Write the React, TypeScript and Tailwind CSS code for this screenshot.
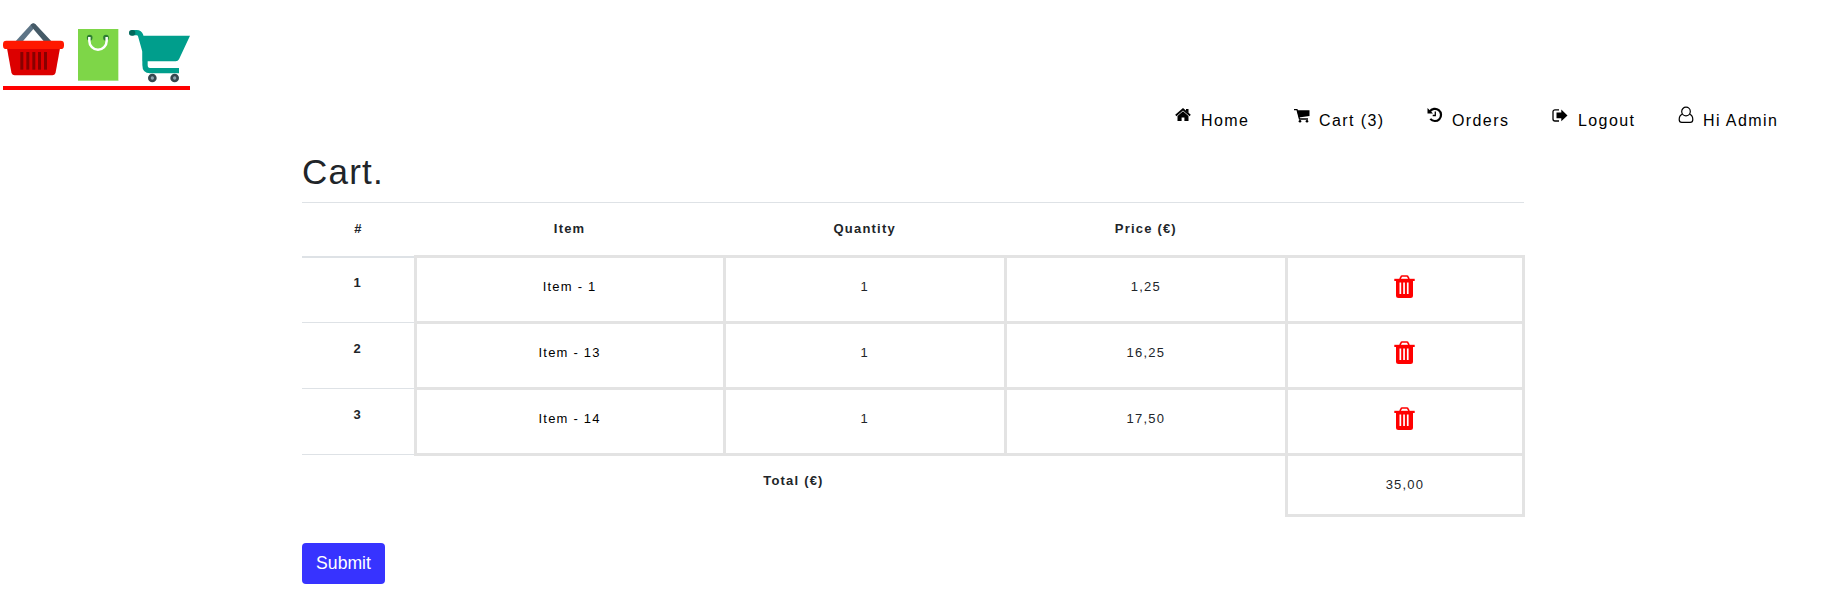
import React from "react";

const items = [
  { n: 1, name: "Item - 1", qty: 1, price: "1,25" },
  { n: 2, name: "Item - 13", qty: 1, price: "16,25" },
  { n: 3, name: "Item - 14", qty: 1, price: "17,50" },
];

function Logo() {
  return (
    <svg className="h-[80px] w-[200px]" viewBox="0 0 600 240" aria-label="Shop logo">
      <path d="M44 82 L92 29 Q100 22 108 29 L100 42 L66 82 Z" fill="#5d7486" />
      <path d="M100 42 L92 29 Q100 20 108 29 L157 82 L134 82 Z" fill="#455a67" />
      <path d="M21 100 H180 L167 172 Q165 181 157 181 H44 Q36 181 34 172 Z" fill="#dc0000" />
      <rect x="9" y="77" width="183" height="25" rx="10" fill="#ff1800" />
      <g fill="#870000">
        <rect x="61" y="111" width="9" height="53" />
        <rect x="79" y="111" width="9" height="53" />
        <rect x="97" y="111" width="9" height="53" />
        <rect x="114" y="111" width="9" height="53" />
        <rect x="132" y="111" width="9" height="53" />
      </g>
      <rect x="234" y="42" width="121" height="155" fill="#7ed648" />
      <rect x="234" y="195" width="121" height="2" fill="#a8e486" />
      <circle cx="269" cy="68" r="8.500" fill="#2e7d32" />
      <circle cx="318" cy="68" r="8.500" fill="#2e7d32" />
      <path d="M268 66 V78 A26 26 0 0 0 320 78 V66" fill="none" stroke="#fff" strokeWidth="7.500" />
      <path d="M397 53 H410 Q419 53 422 62 L435 109 V150 Q435 167 450 167 H537" fill="none" stroke="#009e8c" strokeWidth="16" />
      <path d="M416 62 H570 L537 133 Q534 139 527 139 H428 V105 Z" fill="#009e8c" />
      <rect x="387" y="45" width="19" height="17" rx="8" fill="#00695c" />
      <circle cx="457" cy="189" r="13" fill="#37474f" />
      <circle cx="457" cy="189" r="5" fill="#90a4ae" />
      <circle cx="524" cy="189" r="13" fill="#37474f" />
      <circle cx="524" cy="189" r="5" fill="#90a4ae" />
      <rect x="9" y="213" width="561" height="12" fill="#f00" />
    </svg>
  );
}

function HomeIcon() {
  return (
    <svg viewBox="0 0 16 14" className="h-[14px] w-[16px]">
      <path d="M11 1H13.500V5L11 3Z" />
      <path d="M0.800 7.500L8 1.300L15.200 7.500" fill="none" stroke="#000" strokeWidth="1.800" />
      <path d="M8 3.300L13.500 8V13H9.400V9.400H6.600V13H2.500V8Z" />
    </svg>
  );
}

function CartIcon() {
  return (
    <svg viewBox="0 0 16 14" className="h-[14px] w-[16px]">
      <path d="M0 0.700H3L5.500 10H14" fill="none" stroke="#000" strokeWidth="1.300" />
      <path d="M3 1.200H15.500V7L4.800 8.500Z" />
      <circle cx="6" cy="12.300" r="1.300" />
      <circle cx="13" cy="12.300" r="1.300" />
    </svg>
  );
}

function HistoryIcon() {
  return (
    <svg viewBox="0 0 16 16" className="h-[16px] w-[16px]">
      <path d="M2.800 4.600A6.100 6.100 0 1 1 3.300 11.900" fill="none" stroke="#000" strokeWidth="2.200" />
      <path d="M0.500 1V6.500H6Z" />
      <path d="M8.300 4.500V8.500H5.700" fill="none" stroke="#000" strokeWidth="1.300" />
    </svg>
  );
}

function LogoutIcon() {
  return (
    <svg viewBox="0 0 16 14" className="h-[14px] w-[16px]">
      <path d="M7 0.800H3A2 2 0 0 0 1 2.800V10A2 2 0 0 0 3 12H7" fill="none" stroke="#000" strokeWidth="1.300" />
      <path d="M4.500 3.500H9.300V0.500L15.500 6.400L9.300 12.300V9.300H4.500Z" />
    </svg>
  );
}

function UserIcon() {
  return (
    <svg viewBox="0 0 16 18" className="h-[18px] w-[16px]" fill="none" stroke="#000" strokeWidth="1.200">
      <circle cx="8" cy="5.500" r="4.300" />
      <path d="M4.300 8.200C2 9 1.200 11.500 1.200 13.500C1.200 15.500 2.300 16.400 3.800 16.400H12.200C13.700 16.400 14.800 15.500 14.800 13.500C14.800 11.500 14 9 11.700 8.200" />
    </svg>
  );
}

function TrashIcon() {
  return (
    <svg viewBox="0 0 21 24" className="mx-auto h-[24px] w-[21px]">
      <path d="M6 4L7 1.800Q7.300 1 8.200 1H12.800Q13.700 1 14 1.800L15 4" fill="none" stroke="#f00" strokeWidth="1.700" />
      <rect x="0.300" y="3.800" width="20.400" height="2.200" fill="#f00" />
      <path fillRule="evenodd" fill="#f00" d="M2 5.500H19V20.500Q19 23 16.500 23H4.500Q2 23 2 20.500ZM5.500 7.500V19H7.200V7.500ZM9.200 7.500V19H10.900V7.500ZM12.900 7.500V19H14.600V7.500Z" />
    </svg>
  );
}

const cell = "border-[3px] border-[#e3e3e3] p-0 pb-[6px] align-middle";

export default function App() {
  return (
    <div className="h-[601px] overflow-hidden bg-white font-['Liberation_Sans',Arial,sans-serif] text-[#212529]">
      <header className="flex h-[140px] flex-col pt-[15px]">
        <Logo />
        <nav className="flex h-[45px] text-base leading-6 tracking-[1.4px] text-black">
          <a className="ml-[1175px] flex w-[119px]"><span className="w-[26px] pt-[13px]"><HomeIcon /></span><span className="pt-[14px]">Home</span></a>
          <a className="flex w-[133px]"><span className="w-[25px] pt-[14px]"><CartIcon /></span><span className="pt-[14px]">Cart (3)</span></a>
          <a className="flex w-[125px]"><span className="w-[25px] pt-[12px]"><HistoryIcon /></span><span className="pt-[14px]">Orders</span></a>
          <a className="flex w-[126px]"><span className="w-[26px] pt-[14px]"><LogoutIcon /></span><span className="pt-[14px]">Logout</span></a>
          <a className="flex"><span className="w-[25px] pt-[11px]"><UserIcon /></span><span className="pt-[14px]">Hi Admin</span></a>
        </nav>
      </header>
      <main className="ml-[302px] w-[1223px]">
        <h1 className="h-[62px] pt-[11px] text-[35px] leading-[42px] tracking-[1.2px]">Cart.</h1>
        <table className="w-[1223px] table-fixed border-collapse text-center text-[13px] leading-5 tracking-[1.2px]">
          <colgroup>
            <col className="w-[113px]" />
            <col className="w-[309px]" />
            <col className="w-[281px]" />
            <col className="w-[281px]" />
            <col className="w-[237px]" />
          </colgroup>
          <thead>
            <tr className="h-[54px] border-t border-[#dee2e6]">
              {["#", "Item", "Quantity", "Price (€)", ""].map((h) => (
                <th key={h} className="border-b-2 border-[#dee2e6] p-0 align-middle">{h}</th>
              ))}
            </tr>
          </thead>
          <tbody>
            {items.map((i) => (
              <tr key={i.n} className="h-[66px]">
                <th className="border-y border-[#dee2e6] px-0 pt-[16px] pb-0 align-top [tr:first-child>&]:pt-[15px]">{i.n}</th>
                <td className={`${cell} text-black`}>{i.name}</td>
                <td className={cell}>{i.qty}</td>
                <td className={cell}>{i.price}</td>
                <td className={cell}><TrashIcon /></td>
              </tr>
            ))}
            <tr className="h-[61px]">
              <th colSpan={4} className="px-0 pt-[15px] pb-0 align-top">Total (€)</th>
              <td className="border-[3px] border-[#e3e3e3] p-0 align-middle">35,00</td>
            </tr>
          </tbody>
        </table>
        <button className="mt-[26px] h-[41px] w-[83px] rounded bg-[#3733ff] pt-px text-[17.6px] leading-none text-white">Submit</button>
      </main>
    </div>
  );
}
